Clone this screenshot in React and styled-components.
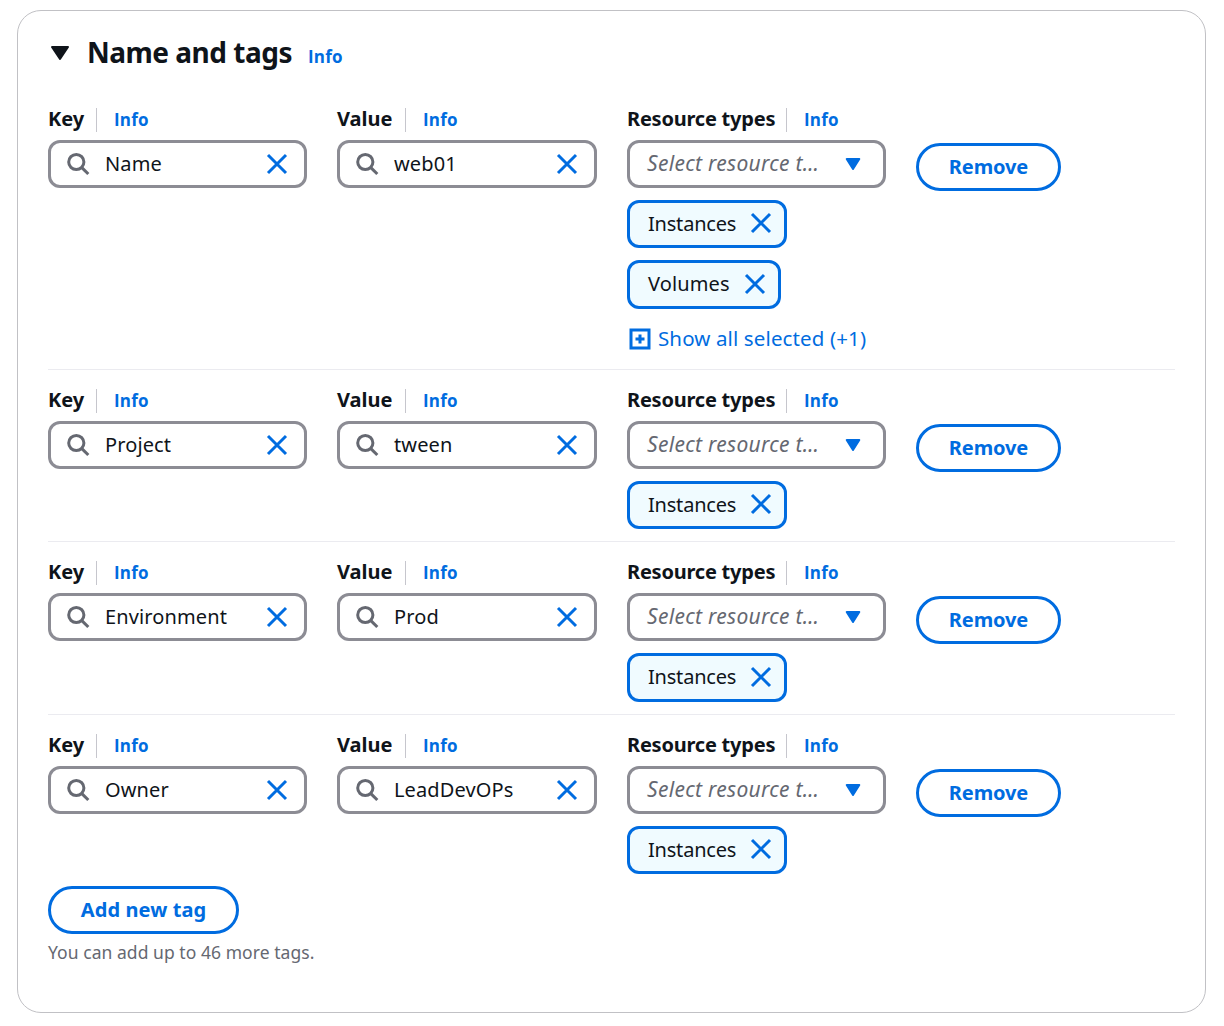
import React from "react";
import styled, { createGlobalStyle } from "styled-components";

const BLUE = "#006ce0";

const GlobalStyle = createGlobalStyle`
  * { box-sizing: border-box; }
  body { margin: 0; background: #fff; color: #0f141a; font-family: "Noto Sans", "Open Sans", sans-serif; }
  button, input { font: inherit; }
`;

const Panel = styled.section`
  margin: 10px 18px 0 17px;
  height: 1003px;
  padding: 0 30px;
  border: 1px solid #c1c1c5;
  border-radius: 24px;
`;

const Header = styled.header`
  display: flex;
  align-items: center;
  height: 84px;
  padding-left: 2px;
`;

const Title = styled.h2`
  width: 205px;
  margin: 0 16px 2px 17px;
  font-size: 28px;
  line-height: 36px;
  font-weight: 700;
  letter-spacing: -0.5px;
  white-space: nowrap;
`;

const InfoLink = styled.a`
  color: ${BLUE};
  font-family: "Open Sans", sans-serif;
  font-size: 17px;
  line-height: 24px;
  font-weight: 700;
  letter-spacing: 0.2px;
`;

const HeaderInfo = styled(InfoLink)`
  margin-top: 8px;
`;

const TagRow = styled.div`
  display: grid;
  grid-template-columns: 259px 260px 259px 145px;
  column-gap: 30px;
  align-items: start;
  height: ${(p) => p.$height}px;
  padding-top: ${(p) => p.$top}px;
  border-bottom: ${(p) => (p.$last ? "0" : "1px solid #ebebf0")};
`;

const Field = styled.div`
  display: flex;
  flex-direction: column;
  align-items: flex-start;
`;

const LabelRow = styled.div`
  display: flex;
  align-items: center;
  height: 24px;
  margin-bottom: 8px;
`;

const Label = styled.label`
  width: ${(p) => p.$width}px;
  padding-bottom: 2px;
  font-size: 20px;
  line-height: 24px;
  font-weight: 700;
  letter-spacing: ${(p) => p.$track}px;
  white-space: nowrap;
`;

const Divider = styled.span`
  width: 1px;
  height: 24px;
  margin: 0 17px 0 12px;
  background: #c6c6cd;
`;

const Control = styled.div`
  display: flex;
  align-items: center;
  width: 100%;
  height: 48px;
  padding: 0 16px 0 15px;
  border: 3px solid #8c8c94;
  border-radius: 12px;
  background: #fff;
`;

const ControlText = styled.span`
  flex: 1;
  margin-left: 15px;
  font-size: 20px;
  line-height: 30px;
  letter-spacing: 0.12px;
  white-space: nowrap;
`;

const Placeholder = styled.span`
  width: 198px;
  margin-left: 2px;
  padding-bottom: 2px;
  color: #656871;
  font-size: 21px;
  font-style: italic;
  line-height: 30px;
  letter-spacing: 0.3px;
  white-space: nowrap;
`;

const IconButton = styled.button`
  display: flex;
  padding: 0;
  border: 0;
  background: none;
`;

const Tokens = styled.div`
  display: flex;
  flex-direction: column;
  align-items: flex-start;
  gap: 12px;
  margin-top: 12px;
`;

const Token = styled.div`
  display: flex;
  align-items: center;
  justify-content: space-between;
  width: ${(p) => p.$width}px;
  height: ${(p) => (p.$tall ? 49 : 48)}px;
  padding: 0 12px ${(p) => (p.$tall ? 1 : 2)}px 18px;
  border: 3px solid ${BLUE};
  border-radius: 12px;
  background: #f0fbff;
  font-size: 20px;
  letter-spacing: ${(p) => p.$track}px;
`;

const TokenText = styled.span`
  padding-bottom: ${(p) => (p.$tall ? 2 : 0)}px;
`;

const ShowAll = styled.button`
  display: flex;
  align-items: center;
  gap: 7px;
  height: 30px;
  margin-top: 2px;
  padding: 0 0 0 2px;
  border: 0;
  background: none;
  color: ${BLUE};
  font-size: 20.5px;
  letter-spacing: 0.12px;
  white-space: nowrap;

  svg { margin-top: 2px; }
`;

const PillButton = styled.button`
  width: ${(p) => p.$width}px;
  height: 48px;
  margin-top: ${(p) => p.$top || 0}px;
  padding: 0 0 1px;
  border: 3px solid ${BLUE};
  border-radius: 24px;
  background: #fff;
  color: ${BLUE};
  font-size: 20px;
  font-weight: 700;
  letter-spacing: ${(p) => p.$track}px;
`;

const Hint = styled.p`
  margin: 6px 0 0;
  color: #656871;
  font-size: 17.5px;
  line-height: 24px;
  letter-spacing: 0.05px;
`;

const SearchIcon = () => (
  <svg width="24" height="24" viewBox="0 0 24 24" fill="none" stroke="#656871" strokeWidth="3">
    <circle cx="10.3" cy="10" r="7.6" />
    <path d="M15.8 15.6 22.3 22" />
  </svg>
);

const CloseIcon = () => (
  <svg width="22" height="22" viewBox="0 0 22 22" fill="none" stroke={BLUE} strokeWidth="3">
    <path d="M2 2 20 20M20 2 2 20" />
  </svg>
);

const HeadingCaret = () => (
  <svg width="20" height="16" viewBox="0 0 20 16" fill="#0f141a" stroke="#0f141a" strokeWidth="2" strokeLinejoin="round">
    <path d="M2 2H18L10 14Z" />
  </svg>
);

const SelectCaret = () => (
  <svg width="16" height="14" viewBox="0 0 16 14" fill={BLUE} stroke={BLUE} strokeWidth="2" strokeLinejoin="round">
    <path d="M1.7 2H14.3L8 12Z" />
  </svg>
);

const ExpandIcon = () => (
  <svg width="22" height="22" viewBox="0 0 22 22" fill="none" stroke={BLUE} strokeWidth="3">
    <path d="M2 2H20V20H2ZM11 6.5V15.5M6.5 11H15.5" />
  </svg>
);

const LABELS = {
  Key: { width: 36, track: 0 },
  Value: { width: 56, track: 0 },
  "Resource types": { width: 147, track: -0.22 },
};

function FieldLabel({ text }) {
  const { width, track } = LABELS[text];
  return (
    <LabelRow>
      <Label $width={width} $track={track}>{text}</Label>
      <Divider />
      <InfoLink>Info</InfoLink>
    </LabelRow>
  );
}

function SearchField({ label, value }) {
  return (
    <Field>
      <FieldLabel text={label} />
      <Control>
        <SearchIcon />
        <ControlText>{value}</ControlText>
        <IconButton aria-label="Clear"><CloseIcon /></IconButton>
      </Control>
    </Field>
  );
}

const TOKENS = {
  Instances: { width: 160, track: -0.2 },
  Volumes: { width: 154, track: 0.12 },
};

function TypeToken({ type, tall }) {
  const { width, track } = TOKENS[type];
  return (
    <Token $width={width} $track={track} $tall={tall}>
      <TokenText $tall={tall}>{type}</TokenText>
      <IconButton aria-label="Remove type"><CloseIcon /></IconButton>
    </Token>
  );
}

const ROWS = [
  { name: "Name", value: "web01", types: ["Instances", "Volumes"], more: 1, height: 275, top: 13 },
  { name: "Project", value: "tween", types: ["Instances"], height: 172, top: 19 },
  { name: "Environment", value: "Prod", types: ["Instances"], height: 173, top: 19, tall: true },
  { name: "Owner", value: "LeadDevOPs", types: ["Instances"], height: 171, top: 19 },
];

export default function App() {
  return (
    <>
      <GlobalStyle />
      <Panel>
        <Header>
          <HeadingCaret />
          <Title>Name and tags</Title>
          <HeaderInfo>Info</HeaderInfo>
        </Header>
        {ROWS.map((row, i) => (
          <TagRow key={row.name} $height={row.height} $top={row.top} $last={i === ROWS.length - 1}>
            <SearchField label="Key" value={row.name} />
            <SearchField label="Value" value={row.value} />
            <Field>
              <FieldLabel text="Resource types" />
              <Control>
                <Placeholder>Select resource t…</Placeholder>
                <SelectCaret />
              </Control>
              <Tokens>
                {row.types.map((type) => (
                  <TypeToken key={type} type={type} tall={row.tall || type === "Volumes"} />
                ))}
                {row.more && (
                  <ShowAll><ExpandIcon />Show all selected (+{row.more})</ShowAll>
                )}
              </Tokens>
            </Field>
            <PillButton $width={145} $top={35} $track={-0.1}>Remove</PillButton>
          </TagRow>
        ))}
        <PillButton $width={191} $track={0.08}>Add new tag</PillButton>
        <Hint>You can add up to 46 more tags.</Hint>
      </Panel>
    </>
  );
}
